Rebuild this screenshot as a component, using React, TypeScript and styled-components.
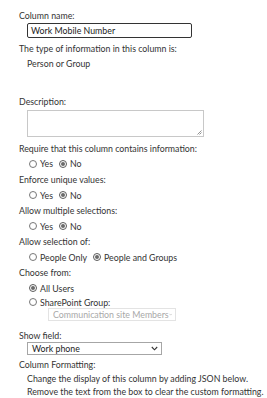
import React from "react";
import styled, { createGlobalStyle } from "styled-components";

const Global = createGlobalStyle`
  html, body {
    margin: 0;
    padding: 0;
    background: #ffffff;
  }
  body {
    font-family: Lato, "Noto Sans", sans-serif;
    font-size: 8.8px;
    color: #333333;
  }
`;

const Page = styled.div`
  width: 267px;
  height: 398px;
  overflow: hidden;
  padding: 8px 0 0 19px;
  box-sizing: border-box;
  display: flex;
  flex-direction: column;
`;

const Label = styled.div<{ gapTop?: number; h?: number }>`
  line-height: ${({ h }) => h ?? 15}px;
  height: ${({ h }) => h ?? 15}px;
  white-space: nowrap;
  margin-top: ${({ gapTop }) => gapTop ?? 0}px;
`;

const Indent = styled.div<{ gapTop?: number; h?: number }>`
  padding-left: 8px;
  margin-top: ${({ gapTop }) => gapTop ?? 0}px;
  line-height: ${({ h }) => h ?? 15}px;
  white-space: nowrap;
`;

const TextInput = styled.div`
  width: 165px;
  height: 15px;
  box-sizing: border-box;
  border: 1px solid #333333;
  border-radius: 2px;
  padding: 0 3px;
  line-height: 13px;
  color: #222222;
`;

const TextArea = styled.div`
  position: relative;
  width: 177px;
  height: 27px;
  margin-top: 1px;
  box-sizing: border-box;
  border: 1px solid #c8c8c8;
`;

const Grip = styled.svg`
  position: absolute;
  right: 1px;
  bottom: 1px;
`;

const RadioRow = styled.div<{ h?: number }>`
  display: flex;
  align-items: center;
  height: ${({ h }) => h ?? 16}px;
  padding-left: 10px;
  gap: 6px;
`;

const RadioItem = styled.label`
  display: flex;
  align-items: center;
  gap: 3px;
  white-space: nowrap;
`;

const Circle = styled.span<{ checked?: boolean }>`
  width: 8px;
  height: 8px;
  box-sizing: border-box;
  border-radius: 50%;
  border: 1px solid ${({ checked }) => (checked ? "#5a5a5a" : "#777777")};
  display: flex;
  align-items: center;
  justify-content: center;
  &::after {
    content: "";
    width: 4px;
    height: 4px;
    border-radius: 50%;
    background: ${({ checked }) => (checked ? "#6a6a6a" : "transparent")};
  }
`;

const SelectBox = styled.div<{ disabled?: boolean; w: number }>`
  width: ${({ w }) => w}px;
  height: 13px;
  box-sizing: border-box;
  border: 1px solid ${({ disabled }) => (disabled ? "#e3e3e3" : "#a6a6a6")};
  color: ${({ disabled }) => (disabled ? "#a8a8a8" : "#222222")};
  display: flex;
  align-items: center;
  justify-content: space-between;
  padding: 0 3px 0 4px;
  line-height: 11px;
`;

const SubSelect = styled.div`
  padding-left: 21px;
`;

const Radio = ({ checked, text }: { checked?: boolean; text: string }) => (
  <RadioItem>
    <Circle checked={checked} />
    {text}
  </RadioItem>
);

const Chevron = ({ color }: { color: string }) => (
  <svg width="7" height="5" viewBox="0 0 7 5">
    <path d="M0.8 1 L3.5 3.8 L6.2 1" fill="none" stroke={color} strokeWidth="1.1" />
  </svg>
);

export default function App() {
  return (
    <>
      <Global />
      <Page>
        <Label>Column name:</Label>
        <Indent>
          <TextInput>Work Mobile Number</TextInput>
        </Indent>
        <Label gapTop={3}>The type of information in this column is:</Label>
        <Indent>Person or Group</Indent>

        <Label gapTop={23}>Description:</Label>
        <Indent>
          <TextArea>
            <Grip width="5" height="5" viewBox="0 0 5 5">
              <path d="M4.5 0.5 L0.5 4.5 M4.5 2.5 L2.5 4.5" stroke="#777" strokeWidth="0.8" />
            </Grip>
          </TextArea>
        </Indent>

        <Label gapTop={4}>Require that this column contains information:</Label>
        <RadioRow h={15}>
          <Radio text="Yes" />
          <Radio checked text="No" />
        </RadioRow>
        <Label gapTop={1}>Enforce unique values:</Label>
        <RadioRow>
          <Radio text="Yes" />
          <Radio checked text="No" />
        </RadioRow>
        <Label>Allow multiple selections:</Label>
        <RadioRow>
          <Radio text="Yes" />
          <Radio checked text="No" />
        </RadioRow>
        <Label>Allow selection of:</Label>
        <RadioRow>
          <Radio text="People Only" />
          <Radio checked text="People and Groups" />
        </RadioRow>
        <Label>Choose from:</Label>
        <RadioRow>
          <Radio checked text="All Users" />
        </RadioRow>
        <RadioRow h={12}>
          <Radio text="SharePoint Group:" />
        </RadioRow>
        <Indent>
          <SubSelect>
            <SelectBox disabled w={128}>
              Communication site Members
              <Chevron color="#b0b0b0" />
            </SelectBox>
          </SubSelect>
        </Indent>

        <Label gapTop={8} h={13}>Show field:</Label>
        <Indent>
          <SelectBox w={135}>
            Work phone
            <Chevron color="#333" />
          </SelectBox>
        </Indent>
        <Label gapTop={3} h={14}>Column Formatting:</Label>
        <Indent h={14}>Change the display of this column by adding JSON below.</Indent>
        <Indent h={12}>Remove the text from the box to clear the custom formatting.</Indent>
      </Page>
    </>
  );
}
